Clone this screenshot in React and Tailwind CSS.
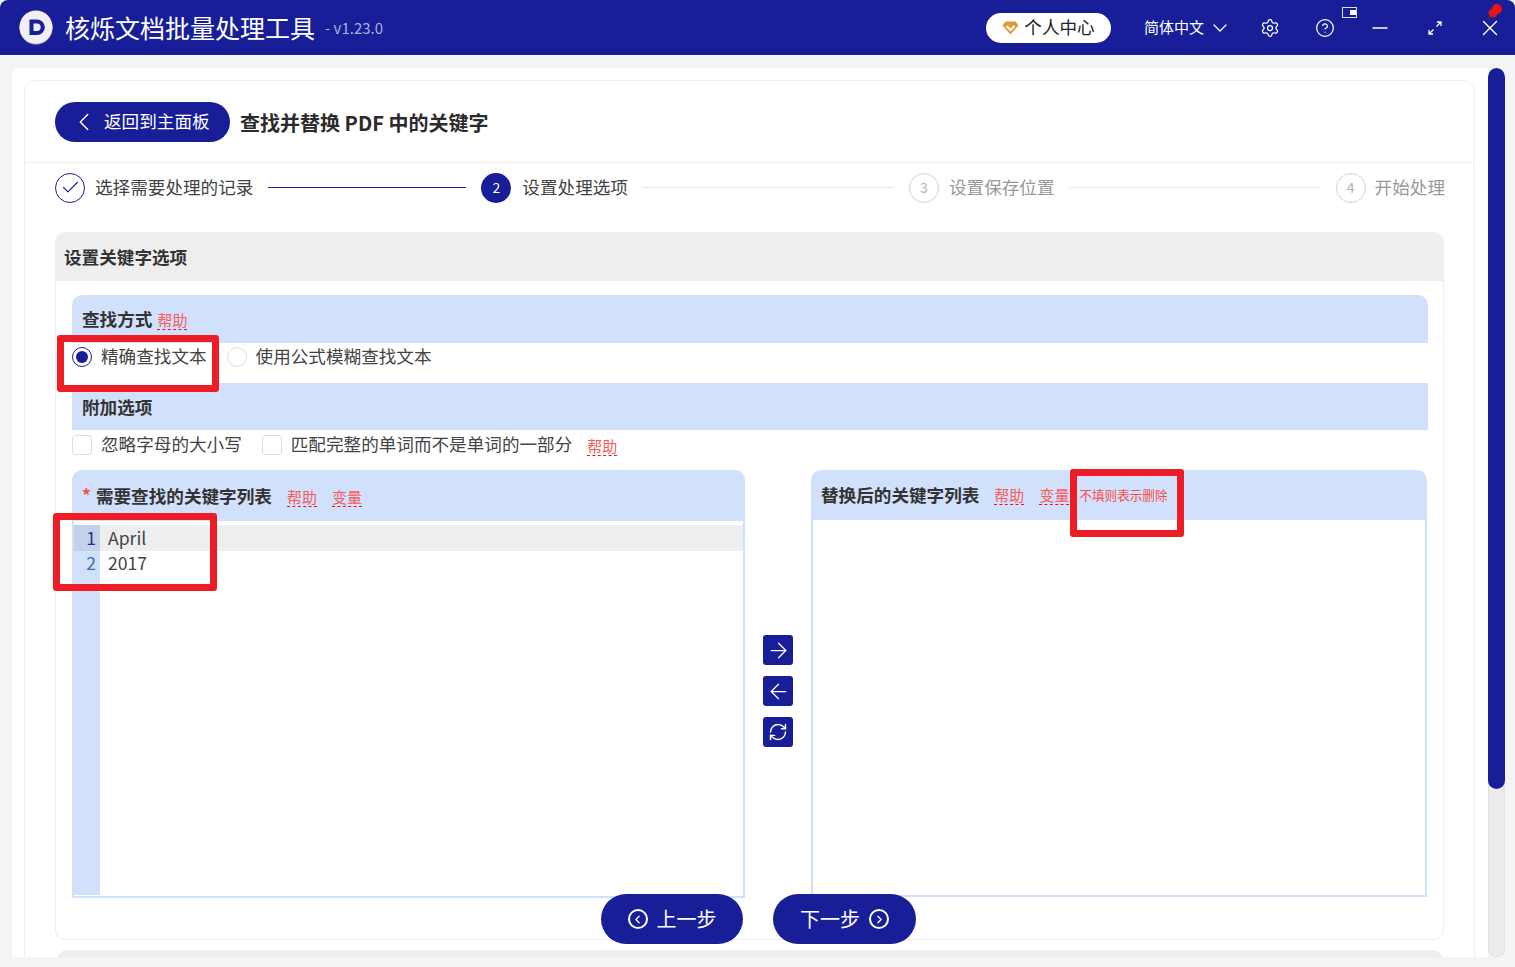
import {
  ArrowLeft,
  ArrowRight,
  Check,
  ChevronDown,
  ChevronLeft,
  ChevronRight,
  CircleHelp,
  Minus,
  RefreshCw,
  Settings,
  X,
} from "lucide-react";

const font = { fontFamily: '"Noto Sans CJK SC", "Noto Sans", sans-serif' };

function Logo() {
  return (
    <svg width="35" height="35" viewBox="0 0 35 35" className="shrink-0">
      <circle cx="17" cy="18" r="16.5" fill="#b9b6c4" />
      <circle cx="17" cy="17" r="16.5" fill="#f1eff3" />
      <path
        d="M10.5 9.5h7.5a7.8 7.8 0 0 1 0 15.6h-7.5z M14.5 13.5v7.6h3.4a3.8 3.8 0 0 0 0-7.6z"
        fill="#181e97"
        fillRule="evenodd"
      />
    </svg>
  );
}

function Diamond() {
  return (
    <svg width="17" height="14" viewBox="0 0 17 14" className="shrink-0">
      <path d="M3.5 0.5h10l3 4-8 9-8-9z" fill="#e09a35" />
      <path d="M4.5 5l4 4 4-4" fill="none" stroke="#fff" strokeWidth="2" />
    </svg>
  );
}

function ExpandIcon() {
  return (
    <svg width="14" height="14" viewBox="0 0 14 14" fill="none" stroke="#fff" strokeWidth="1.3">
      <path d="M8.5 5.5L13 1M9 1h4v4" />
      <path d="M5.5 8.5L1 13M1 9v4h4" />
    </svg>
  );
}

function Pin() {
  return (
    <svg width="18" height="18" viewBox="0 0 18 18">
      <path d="M2 16l5-5" stroke="#333" strokeWidth="1.5" />
      <circle cx="7" cy="10" r="4.5" fill="#d81818" />
      <circle cx="11" cy="6" r="5" fill="#f50f0f" />
    </svg>
  );
}

function HelpLink({ children, className = "" }) {
  return (
    <span className={`border-b border-dashed border-[#e8112d] text-[15px] leading-[18px] text-[#fb5b5b] ${className}`}>
      {children}
    </span>
  );
}

function StepCircle({ children, tone }) {
  const tones = {
    done: "border border-[#181e97] text-[#181e97]",
    active: "bg-[#181e97] text-white",
    todo: "border border-[#d5d0d0] text-[#b5b0b0]",
  };
  return (
    <div className={`flex h-[30px] w-[30px] shrink-0 items-center justify-center rounded-full text-[14px] ${tones[tone]}`}>
      {children}
    </div>
  );
}

function Gutter() {
  return (
    <div className="mb-[1px] w-[26px] shrink-0 bg-[#d1e1fb] text-right text-[17.6px] leading-[26px]">
      <div className="h-[26px] bg-[#c3d2ea] pr-[4px] text-[#2c2f80]">1</div>
      <div className="h-[24px] pr-[4px] leading-[24px] text-[#3a6fb0]">2</div>
    </div>
  );
}

function App() {
  return (
    <div style={font} className="relative flex h-[967px] w-full flex-col overflow-hidden bg-[#f4f4f4] text-[#333]">
      {/* Title bar */}
      <header className="flex h-[55px] shrink-0 items-center rounded-tl-[8px] rounded-tr-[8px] bg-[#181e97] pl-[19px] text-white">
        <Logo />
        <span className="ml-[11px] text-[25px] leading-none">核烁文档批量处理工具</span>
        <span className="ml-[10px] mt-[2px] text-[15px] text-[#a5b4dc]">- v1.23.0</span>

        <div className="ml-auto mr-[33px] flex h-[30px] w-[125px] items-center justify-center gap-[5px] rounded-full bg-white text-[17.6px] text-[#222]">
          <Diamond />
          <span>个人中心</span>
        </div>
        <span className="text-[15px]">简体中文</span>
        <ChevronDown size={24} strokeWidth={1.3} className="ml-[4px]" />
        <Settings size={20} strokeWidth={1.5} className="ml-[28px]" />
        <CircleHelp size={20} strokeWidth={1.5} className="ml-[35px]" />
        <Minus size={24} strokeWidth={1.4} className="ml-[33px]" />
        <div className="ml-[36px]">
          <ExpandIcon />
        </div>
        <X size={26} strokeWidth={1.3} className="ml-[35px] mr-[12px]" />
      </header>

      {/* Small tray marks lying over the title bar */}
      <div className="absolute left-[1342px] top-[7px] h-[11px] w-[15px] border border-[#ddd] bg-[#181e97]">
        <div className="absolute right-0 top-[2px] h-[5px] w-[6px] bg-white" />
      </div>
      <div className="absolute left-[1486px] top-[3px]">
        <Pin />
      </div>

      <main className="flex min-h-0 flex-1 pb-[10px] pl-[12px] pr-[10px] pt-[13px]">
        <div className="min-w-0 flex-1 overflow-hidden rounded-tl-[8px] bg-white pl-[12px] pr-[13px] pt-[12px]">
          <div className="h-[900px] rounded-t-[12px] border border-[#eeeeee]">
            {/* Page title */}
            <div className="flex h-[82px] items-center border-b border-[#eeeeee] pl-[30px]">
              <button className="flex h-[40px] w-[175px] items-center rounded-full bg-[#181e97] pl-[14px] text-[17.6px] text-white">
                <ChevronLeft size={30} strokeWidth={1.2} />
                <span className="ml-[5px]">返回到主面板</span>
              </button>
              <h1 className="ml-[10px] mt-[2px] text-[20px] font-bold text-[#2b2b2b]">查找并替换 PDF 中的关键字</h1>
            </div>

            {/* Steps */}
            <div className="flex h-[49px] items-center pl-[30px] pr-[29px] text-[17.6px]">
              <StepCircle tone="done">
                <Check size={21} strokeWidth={1.3} />
              </StepCircle>
              <span className="ml-[10px] shrink-0 text-[#444]">选择需要处理的记录</span>
              <div className="ml-[15px] mr-[15px] h-px w-[198px] shrink-0 bg-[#181e97]" />
              <StepCircle tone="active">2</StepCircle>
              <span className="ml-[11px] shrink-0 text-[#444]">设置处理选项</span>
              <div className="ml-[14px] mr-[15px] h-px flex-1 bg-[#e8e8e8]" />
              <StepCircle tone="todo">3</StepCircle>
              <span className="ml-[10px] shrink-0 text-[#999]">设置保存位置</span>
              <div className="ml-[14px] mr-[15px] h-px flex-1 bg-[#e8e8e8]" />
              <StepCircle tone="todo">4</StepCircle>
              <span className="ml-[9px] shrink-0 text-[#999]">开始处理</span>
            </div>

            {/* Options card */}
            <div className="ml-[30px] mr-[30px] mt-[20px] h-[708px] rounded-[10px] border border-[#eeeeee]">
              <div className="flex h-[48px] items-center rounded-t-[10px] bg-[#eeeeee] pl-[8px] text-[17.6px] font-bold text-[#333]">
                设置关键字选项
              </div>

              <div className="pl-[16px] pr-[15px] pt-[14px]">
                <div className="flex h-[48px] items-center gap-[5px] rounded-t-[10px] bg-[#d1e1fb] pl-[10px]">
                  <span className="text-[17.6px] font-bold">查找方式</span>
                  <HelpLink className="mt-[3px]">帮助</HelpLink>
                </div>
                <div className="flex h-[40px] items-start text-[17.6px] text-[#444]">
                  <span className="mt-[4px] flex h-[20px] w-[20px] items-center justify-center rounded-full border border-[#181e97]">
                    <span className="h-[12px] w-[12px] rounded-full bg-[#181e97]" />
                  </span>
                  <span className="ml-[9px]">精确查找文本</span>
                  <span className="ml-[20px] mt-[4px] h-[20px] w-[20px] rounded-full border border-[#dddddd]" />
                  <span className="ml-[9px]">使用公式模糊查找文本</span>
                </div>

                <div className="flex h-[47px] items-center bg-[#d1e1fb] pl-[10px] pt-[2px] text-[17.6px] font-bold">附加选项</div>
                <div className="flex h-[40px] items-start pt-[1px] text-[17.6px] text-[#444]">
                  <span className="mt-[4px] h-[20px] w-[20px] rounded-[3px] border border-[#dddddd]" />
                  <span className="ml-[9px]">忽略字母的大小写</span>
                  <span className="ml-[20px] mt-[4px] h-[20px] w-[20px] rounded-[3px] border border-[#dddddd]" />
                  <span className="ml-[9px]">匹配完整的单词而不是单词的一部分</span>
                  <HelpLink className="ml-[15px] mt-[6px]">帮助</HelpLink>
                </div>

                {/* Keyword lists */}
                <div className="flex h-[428px] w-[1355px] gap-[18px]">
                  <section className="flex w-[673px] flex-col">
                    <div className="flex h-[51px] shrink-0 items-center rounded-t-[10px] bg-[#d1e1fb] pl-[10px]">
                      <span className="mr-[5px] text-[17.6px] font-bold text-[#f0524f]">*</span>
                      <span className="mt-[1px] text-[17.6px] font-bold">需要查找的关键字列表</span>
                      <HelpLink className="ml-[15px] mt-[3px]">帮助</HelpLink>
                      <HelpLink className="ml-[15px] mt-[3px]">变量</HelpLink>
                    </div>
                    <div className="flex min-h-0 flex-1 border-x-2 border-b-2 border-[#d1e1fb] pt-[4px]">
                      <Gutter />
                      <div className="flex-1 text-[17.6px] leading-[26px] text-[#444]">
                        <div className="h-[26px] bg-[#eeeeee] pl-[8px]">April</div>
                        <div className="h-[24px] pl-[8px] leading-[24px]">2017</div>
                      </div>
                    </div>
                  </section>

                  <div className="flex w-[30px] shrink-0 flex-col items-center justify-center gap-[11px] pt-[14px] text-white">
                    <button className="flex h-[30px] w-[30px] items-center justify-center rounded-[3px] bg-[#181e97]">
                      <ArrowRight size={25} strokeWidth={1.2} />
                    </button>
                    <button className="flex h-[30px] w-[30px] items-center justify-center rounded-[3px] bg-[#181e97]">
                      <ArrowLeft size={25} strokeWidth={1.2} />
                    </button>
                    <button className="flex h-[30px] w-[30px] items-center justify-center rounded-[3px] bg-[#181e97]">
                      <RefreshCw size={20} strokeWidth={1.7} />
                    </button>
                  </div>

                  <section className="flex h-[427px] w-[616px] flex-col">
                    <div className="flex h-[50px] shrink-0 items-center rounded-t-[10px] bg-[#d1e1fb] pl-[10px]">
                      <span className="text-[17.6px] font-bold">替换后的关键字列表</span>
                      <HelpLink className="ml-[15px]">帮助</HelpLink>
                      <HelpLink className="ml-[15px]">变量</HelpLink>
                      <span className="ml-[10px] text-[12.6px] text-[#fb4b4b]">不填则表示删除</span>
                    </div>
                    <div className="flex-1 border-x-2 border-b-2 border-[#d1e1fb]" />
                  </section>
                </div>

                {/* Previous / next */}
                <div className="-mt-[4px] flex gap-[30px] pl-[529px] text-[20px] text-white">
                  <button className="flex h-[50px] w-[142px] items-center justify-center gap-[9px] rounded-full bg-[#181e97]">
                    <span className="flex h-[20px] w-[20px] items-center justify-center rounded-full border-2 border-white">
                      <ChevronLeft size={13} strokeWidth={2.4} />
                    </span>
                    上一步
                  </button>
                  <button className="flex h-[50px] w-[143px] items-center justify-center gap-[9px] rounded-full bg-[#181e97]">
                    下一步
                    <span className="flex h-[20px] w-[20px] items-center justify-center rounded-full border-2 border-white">
                      <ChevronRight size={13} strokeWidth={2.4} />
                    </span>
                  </button>
                </div>
              </div>
            </div>

            {/* Next card, cut off by the panel */}
            <div className="ml-[32px] mr-[31px] mt-[10px] h-[60px] rounded-t-[10px] bg-[#eeeeee]" />
          </div>
        </div>

        {/* Scroll bar */}
        <div className="w-[17px] shrink-0 overflow-hidden rounded-full bg-[#ececec] shadow-[inset_0_0_2px_#c8c8c8]">
          <div className="h-[721px] rounded-full bg-[#181e97]" />
        </div>
      </main>

      {/* Red marks drawn on the screenshot */}
      <div className="absolute left-[57px] top-[335px] h-[57px] w-[162px] rounded-[3px] border-[7px] border-[#ee1c25]">
        <div className="absolute bottom-0 left-0 h-[2px] w-full bg-white" />
      </div>
      <div className="absolute left-[53px] top-[513px] h-[78px] w-[164px] rounded-[3px] border-[7px] border-[#ee1c25]" />
      <div className="absolute left-[1070px] top-[469px] h-[68px] w-[114px] rounded-[3px] border-[7px] border-[#ee1c25]" />
    </div>
  );
}

export default App;
